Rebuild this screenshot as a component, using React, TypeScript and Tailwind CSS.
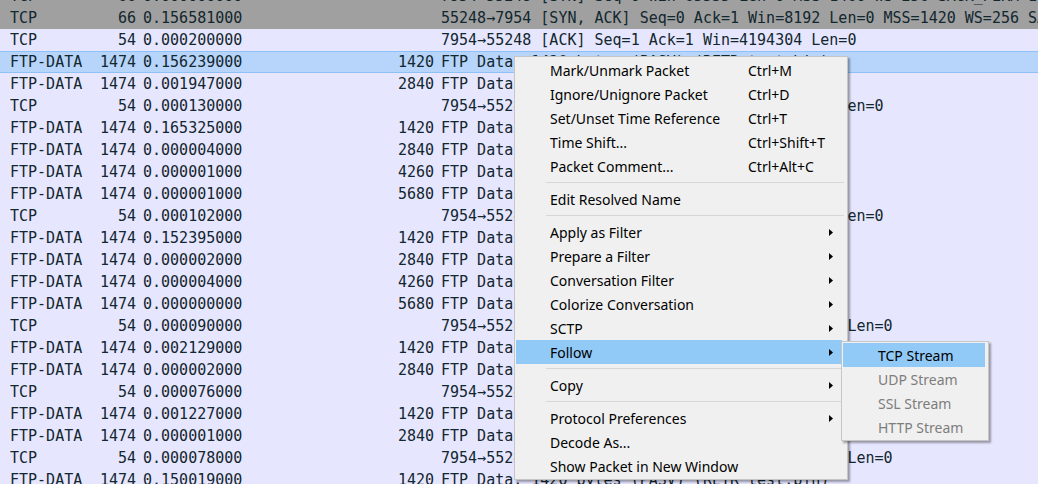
import { Fragment } from 'react'

type Row = {
  proto: string
  len: string
  time: string
  bytes: string
  info: string
  kind?: 'syn' | 'selected'
}

const ack = (n: string) => `7954→55248 [ACK] Seq=1 Ack=${n} Win=4194304 Len=0`
const ftp = 'FTP Data: 1420 bytes (PASV) (RETR test.bin)'

const rows: Row[] = [
  { proto: 'TCP', len: '66', time: '0.000000000', bytes: '', info: '7954→55248 [SYN] Seq=0 Win=65535 Len=0 MSS=1460 WS=256 SACK_PERM=1', kind: 'syn' },
  { proto: 'TCP', len: '66', time: '0.156581000', bytes: '', info: '55248→7954 [SYN, ACK] Seq=0 Ack=1 Win=8192 Len=0 MSS=1420 WS=256 SACK_PERM=1', kind: 'syn' },
  { proto: 'TCP', len: '54', time: '0.000200000', bytes: '', info: ack('1') },
  { proto: 'FTP-DATA', len: '1474', time: '0.156239000', bytes: '1420', info: ftp, kind: 'selected' },
  { proto: 'FTP-DATA', len: '1474', time: '0.001947000', bytes: '2840', info: ftp },
  { proto: 'TCP', len: '54', time: '0.000130000', bytes: '', info: ack('2841') },
  { proto: 'FTP-DATA', len: '1474', time: '0.165325000', bytes: '1420', info: ftp },
  { proto: 'FTP-DATA', len: '1474', time: '0.000004000', bytes: '2840', info: ftp },
  { proto: 'FTP-DATA', len: '1474', time: '0.000001000', bytes: '4260', info: ftp },
  { proto: 'FTP-DATA', len: '1474', time: '0.000001000', bytes: '5680', info: ftp },
  { proto: 'TCP', len: '54', time: '0.000102000', bytes: '', info: ack('8521') },
  { proto: 'FTP-DATA', len: '1474', time: '0.152395000', bytes: '1420', info: ftp },
  { proto: 'FTP-DATA', len: '1474', time: '0.000002000', bytes: '2840', info: ftp },
  { proto: 'FTP-DATA', len: '1474', time: '0.000004000', bytes: '4260', info: ftp },
  { proto: 'FTP-DATA', len: '1474', time: '0.000000000', bytes: '5680', info: ftp },
  { proto: 'TCP', len: '54', time: '0.000090000', bytes: '', info: ack('11361') },
  { proto: 'FTP-DATA', len: '1474', time: '0.002129000', bytes: '1420', info: ftp },
  { proto: 'FTP-DATA', len: '1474', time: '0.000002000', bytes: '2840', info: ftp },
  { proto: 'TCP', len: '54', time: '0.000076000', bytes: '', info: ack('14201') },
  { proto: 'FTP-DATA', len: '1474', time: '0.001227000', bytes: '1420', info: ftp },
  { proto: 'FTP-DATA', len: '1474', time: '0.000001000', bytes: '2840', info: ftp },
  { proto: 'TCP', len: '54', time: '0.000078000', bytes: '', info: ack('17041') },
  { proto: 'FTP-DATA', len: '1474', time: '0.150019000', bytes: '1420', info: ftp },
]

type Item = { label: string; keys?: string; sub?: boolean; active?: boolean } | 'sep'

const menu: Item[] = [
  { label: 'Mark/Unmark Packet', keys: 'Ctrl+M' },
  { label: 'Ignore/Unignore Packet', keys: 'Ctrl+D' },
  { label: 'Set/Unset Time Reference', keys: 'Ctrl+T' },
  { label: 'Time Shift...', keys: 'Ctrl+Shift+T' },
  { label: 'Packet Comment...', keys: 'Ctrl+Alt+C' },
  'sep',
  { label: 'Edit Resolved Name' },
  'sep',
  { label: 'Apply as Filter', sub: true },
  { label: 'Prepare a Filter', sub: true },
  { label: 'Conversation Filter', sub: true },
  { label: 'Colorize Conversation', sub: true },
  { label: 'SCTP', sub: true },
  { label: 'Follow', sub: true, active: true },
  'sep',
  { label: 'Copy', sub: true },
  'sep',
  { label: 'Protocol Preferences', sub: true },
  { label: 'Decode As...' },
  { label: 'Show Packet in New Window' },
]

const follow = [
  { label: 'TCP Stream', enabled: true },
  { label: 'UDP Stream' },
  { label: 'SSL Stream' },
  { label: 'HTTP Stream' },
]

function Arrow() {
  return (
    <svg width="4" height="7" viewBox="0 0 4 7" className="fill-black">
      <path d="M0 0 L4 3.5 L0 7 Z" />
    </svg>
  )
}

function rowClass(kind?: Row['kind']) {
  if (kind === 'syn') return 'bg-[#a0a0a0]'
  if (kind === 'selected') return 'bg-[#b7d4fb] border-y border-[#8fc1f7]'
  return 'bg-[#e7e6ff]'
}

export default function App() {
  return (
    <div className="relative w-[1038px] h-[484px] overflow-hidden bg-[#e7e6ff] font-['DejaVu_Sans_Mono',monospace] text-[15px] text-[#12272e]">
      {/* packet list */}
      <div className="flex flex-col -mt-[15px]">
        {rows.map((r, i) => (
          <div key={i} className={`flex items-center h-[22px] pl-[10px] whitespace-nowrap ${rowClass(r.kind)}`}>
            <span className="w-[80px] shrink-0">{r.proto}</span>
            <span className="w-[46px] shrink-0 text-right">{r.len}</span>
            <span className="w-[150px] shrink-0 ml-[7px]">{r.time}</span>
            <span className="w-[141px] shrink-0 text-right">{r.bytes}</span>
            <span className="ml-[7px]">{r.info}</span>
          </div>
        ))}
      </div>

      {/* context menu */}
      <div className="absolute left-[514px] top-[56px] w-[334px] bg-[#f0f0f0] border border-[#c6c6c6] pt-[1px] pb-[1px] shadow-[2px_2px_2px_rgba(0,0,0,0.35)] font-['Noto_Sans',sans-serif] text-[14px] text-black">
        {menu.map((it, i) =>
          it === 'sep' ? (
            <div key={i} className="h-[9px] flex items-center pl-[31px] pr-[3px]">
              <div className="h-px w-full bg-[#d7d7d7]" />
            </div>
          ) : (
            <div
              key={i}
              className={`flex items-center h-[24px] ml-[1px] mr-[5px] pl-[34px] pr-[9px] ${it.active ? 'bg-[#91c9f7]' : ''}`}
            >
              <span className="w-[198px] shrink-0">{it.label}</span>
              <span className="flex-1">{it.keys}</span>
              {it.sub && <Arrow />}
            </div>
          ),
        )}
      </div>

      {/* Follow submenu */}
      <div className="absolute left-[841px] top-[341px] w-[148px] bg-[#f0f0f0] border border-[#c6c6c6] p-[1px] shadow-[2px_2px_2px_rgba(0,0,0,0.35)] font-['Noto_Sans',sans-serif] text-[14px]">
        {follow.map((f) => (
          <Fragment key={f.label}>
            <div
              className={`flex items-center h-[24px] mr-[2px] pl-[35px] ${f.enabled ? 'bg-[#91c9f7] text-black' : 'text-[#7d7d7d]'}`}
            >
              {f.label}
            </div>
          </Fragment>
        ))}
      </div>
    </div>
  )
}
